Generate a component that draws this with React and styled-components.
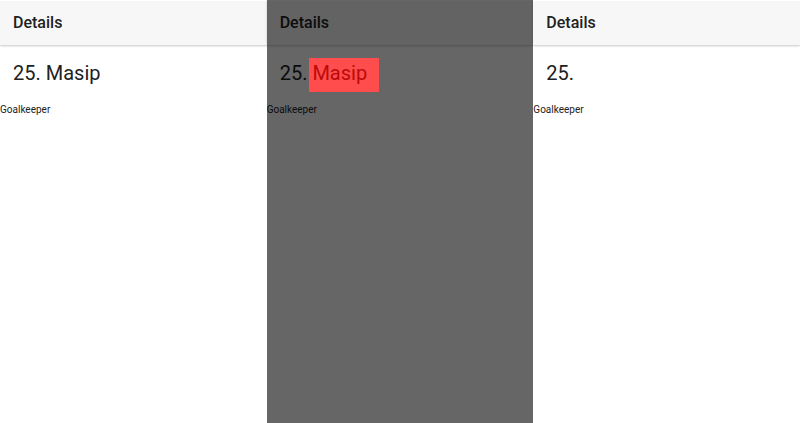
import styled, { createGlobalStyle } from 'styled-components';

const GlobalStyle = createGlobalStyle`
  html, body {
    margin: 0;
    padding: 0;
    background: #fff;
    font-family: Roboto, 'Liberation Sans', sans-serif;
  }
`;

const Screens = styled.div`
  display: grid;
  grid-template-columns: repeat(3, 1fr);
  width: 800px;
  height: 423px;
  overflow: hidden;
`;

const Screen = styled.div`
  position: relative;
  background: #fff;
  height: 100%;
`;

const Header = styled.div`
  position: relative;
  height: 44px;
  border-top: 1px solid #fff;
  background: #f7f7f7;
  box-shadow: 0 1px 2px rgba(0, 0, 0, 0.22);
  padding-left: 13px;
  font-size: 16px;
  font-weight: 500;
  line-height: 44px;
  color: #212121;
`;

const Name = styled.div`
  padding: 16px 13px 0;
  font-size: 20px;
  line-height: 24px;
  color: #212121;
`;

const Surname = styled.span`
  ${(p) =>
    p.$highlight &&
    `
    position: relative;
    z-index: 2;
    display: inline-block;
    padding: 3px 12px 7px 3px;
    margin: -3px -12px -7px -3px;
    background: #ff4d4d;
    color: #bc0a0a;
  `}
`;

const Role = styled.div`
  margin-top: 19px;
  font-size: 10px;
  line-height: 12px;
  color: #222;
`;

const Dim = styled.div`
  position: absolute;
  inset: 0;
  background: rgba(0, 0, 0, 0.6);
  z-index: 1;
`;

const DetailsScreen = ({ surname, dimmed, highlight }) => (
  <Screen>
    <Header>Details</Header>
    <Name>
      25. {surname && <Surname $highlight={highlight}>{surname}</Surname>}
    </Name>
    <Role>Goalkeeper</Role>
    {dimmed && <Dim />}
  </Screen>
);

const App = () => (
  <>
    <GlobalStyle />
    <Screens>
      <DetailsScreen surname="Masip" />
      <DetailsScreen surname="Masip" dimmed highlight />
      <DetailsScreen />
    </Screens>
  </>
);

export default App;
